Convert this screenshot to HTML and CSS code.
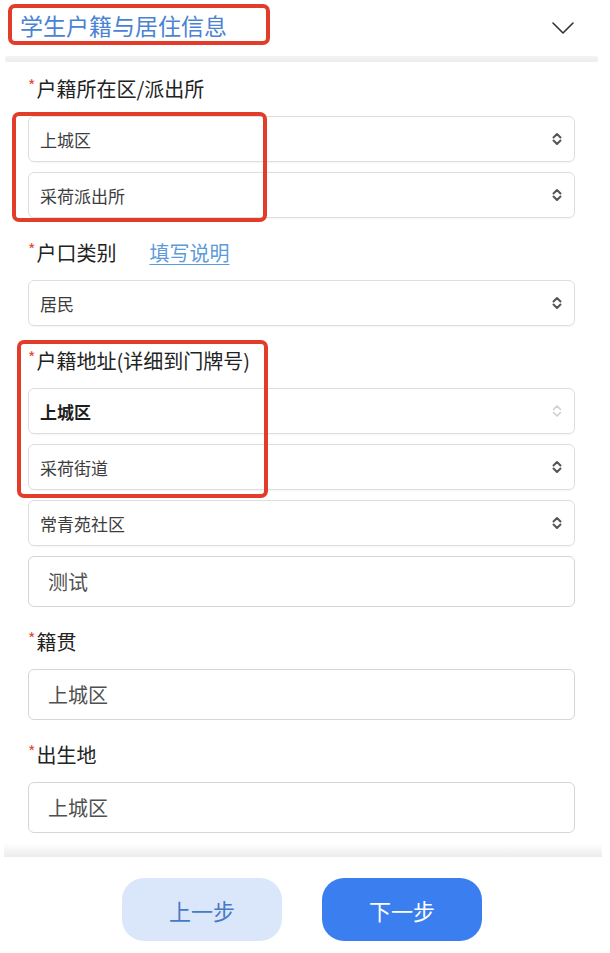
FILE: index.html
```html
<!DOCTYPE html>
<html lang="zh-CN">
<head>
<meta charset="utf-8">
<title>学生户籍与居住信息</title>
<link rel="stylesheet" href="styles.css">
</head>
<body>
<div class="page">
  <header class="section-head">
    <h2 class="section-title">学生户籍与居住信息</h2>
    <svg class="chevron" width="22" height="12" viewBox="0 0 22 12"><path d="M1 1 L11 11 L21 1" fill="none" stroke="#333" stroke-width="1.6" stroke-linecap="round" stroke-linejoin="round"/></svg>
  </header>
  <div class="divider"></div>

  <main class="form">
    <section class="group">
      <div class="label"><span class="req">*</span>户籍所在区/派出所</div>
      <div class="controls">
        <div class="select"><span>上城区</span><svg class="updown" width="10" height="14" viewBox="0 0 10 14"><path d="M1.5 5.5 L5 2 L8.5 5.5 M1.5 8.5 L5 12 L8.5 8.5" fill="none" stroke="#555" stroke-width="2" stroke-linecap="round" stroke-linejoin="round"/></svg></div>
        <div class="select"><span>采荷派出所</span><svg class="updown" width="10" height="14" viewBox="0 0 10 14"><path d="M1.5 5.5 L5 2 L8.5 5.5 M1.5 8.5 L5 12 L8.5 8.5" fill="none" stroke="#555" stroke-width="2" stroke-linecap="round" stroke-linejoin="round"/></svg></div>
      </div>
    </section>

    <section class="group">
      <div class="label"><span class="req">*</span>户口类别<a class="help-link" href="#">填写说明</a></div>
      <div class="controls">
        <div class="select"><span>居民</span><svg class="updown" width="10" height="14" viewBox="0 0 10 14"><path d="M1.5 5.5 L5 2 L8.5 5.5 M1.5 8.5 L5 12 L8.5 8.5" fill="none" stroke="#555" stroke-width="2" stroke-linecap="round" stroke-linejoin="round"/></svg></div>
      </div>
    </section>

    <section class="group">
      <div class="label"><span class="req">*</span>户籍地址(详细到门牌号)</div>
      <div class="controls">
        <div class="select select-locked"><span>上城区</span><svg class="updown" width="10" height="14" viewBox="0 0 10 14"><path d="M1.5 5.5 L5 2 L8.5 5.5 M1.5 8.5 L5 12 L8.5 8.5" fill="none" stroke="#cfcfcf" stroke-width="1.6" stroke-linecap="round" stroke-linejoin="round"/></svg></div>
        <div class="select"><span>采荷街道</span><svg class="updown" width="10" height="14" viewBox="0 0 10 14"><path d="M1.5 5.5 L5 2 L8.5 5.5 M1.5 8.5 L5 12 L8.5 8.5" fill="none" stroke="#555" stroke-width="2" stroke-linecap="round" stroke-linejoin="round"/></svg></div>
        <div class="select"><span>常青苑社区</span><svg class="updown" width="10" height="14" viewBox="0 0 10 14"><path d="M1.5 5.5 L5 2 L8.5 5.5 M1.5 8.5 L5 12 L8.5 8.5" fill="none" stroke="#555" stroke-width="2" stroke-linecap="round" stroke-linejoin="round"/></svg></div>
        <div class="input">测试</div>
      </div>
    </section>

    <section class="group">
      <div class="label"><span class="req">*</span>籍贯</div>
      <div class="controls">
        <div class="input">上城区</div>
      </div>
    </section>

    <section class="group">
      <div class="label"><span class="req">*</span>出生地</div>
      <div class="controls">
        <div class="input">上城区</div>
      </div>
    </section>
  </main>

  <footer class="footer">
    <div class="footer-shadow"></div>
    <div class="actions">
      <button class="btn btn-prev" type="button">上一步</button>
      <button class="btn btn-next" type="button">下一步</button>
    </div>
  </footer>

  <div class="mark mark-title"></div>
  <div class="mark mark-station"></div>
  <div class="mark mark-address"></div>
</div>
</body>
</html>
```

FILE: styles.css
```css
* { box-sizing: border-box; }

html, body {
  margin: 0;
  padding: 0;
  background: #fff;
}

body {
  font-family: "Noto Sans CJK SC", "Noto Sans", sans-serif;
  color: #222;
}

.page {
  position: relative;
  width: 610px;
  min-height: 953px;
}

.section-head {
  height: 56px;
  display: flex;
  align-items: center;
  justify-content: space-between;
  padding: 0 36px 6px 20px;
}

.section-title {
  margin: 0;
  font-size: 23px;
  font-weight: 400;
  line-height: 1;
  color: #4a83d3;
}

.chevron {
  display: block;
  margin-top: 6px;
}

.divider {
  height: 6px;
  margin: 0 12px 0 5px;
  background: linear-gradient(#f4f4f4, #ececec);
  border-radius: 2px;
}

.form {
  padding: 14px 35px 0 28px;
  display: flex;
  flex-direction: column;
  gap: 22px;
}

.group {
  display: flex;
  flex-direction: column;
  gap: 14px;
}

.label {
  font-size: 20px;
  line-height: 26px;
  height: 26px;
  color: #222;
  white-space: nowrap;
}

.req {
  color: #e5493a;
  font-size: 16px;
  line-height: 18px;
  vertical-align: top;
  margin-right: 1px;
}

.help-link {
  margin-left: 33px;
  color: #5b9bd9;
  text-decoration: underline;
  text-underline-offset: 3px;
  text-decoration-thickness: 1px;
}

.controls {
  display: flex;
  flex-direction: column;
  gap: 10px;
}

.select {
  height: 46px;
  border: 1px solid #dedede;
  border-radius: 6px;
  display: flex;
  align-items: center;
  justify-content: space-between;
  padding: 0 12px 0 11px;
  font-size: 17px;
  color: #3d3d3d;
  box-shadow: 0 1px 1px rgba(0,0,0,0.04);
}

.select-locked {
  color: #1e1e1e;
  font-weight: 700;
}

.updown {
  display: block;
}

.input {
  height: 51px;
  border: 1px solid #d6d6d6;
  border-radius: 6px;
  display: flex;
  align-items: center;
  padding: 0 19px;
  font-size: 20px;
  color: #505050;
}

.footer {
  margin-top: 10px;
}

.footer-shadow {
  height: 14px;
  margin: 0 8px 0 4px;
  background: linear-gradient(#ffffff, #ececec);
}

.actions {
  display: flex;
  justify-content: center;
  gap: 40px;
  padding: 21px 6px 0 0;
}

.btn {
  width: 160px;
  height: 63px;
  border: none;
  border-radius: 22px;
  font-family: "Noto Sans CJK SC", "Noto Sans", sans-serif;
  font-size: 22px;
  cursor: pointer;
}

.btn-prev {
  background: #dae7fb;
  color: #4679c7;
}

.btn-next {
  background: #3a7ef0;
  color: #fff;
}

.mark {
  position: absolute;
  border: 4px solid #e23d2a;
  border-radius: 7px;
  pointer-events: none;
}

.mark-title {
  left: 8px;
  top: 4px;
  width: 262px;
  height: 41px;
}

.mark-station {
  left: 12px;
  top: 112px;
  width: 255px;
  height: 110px;
}

.mark-address {
  left: 17px;
  top: 340px;
  width: 251px;
  height: 158px;
}
```
